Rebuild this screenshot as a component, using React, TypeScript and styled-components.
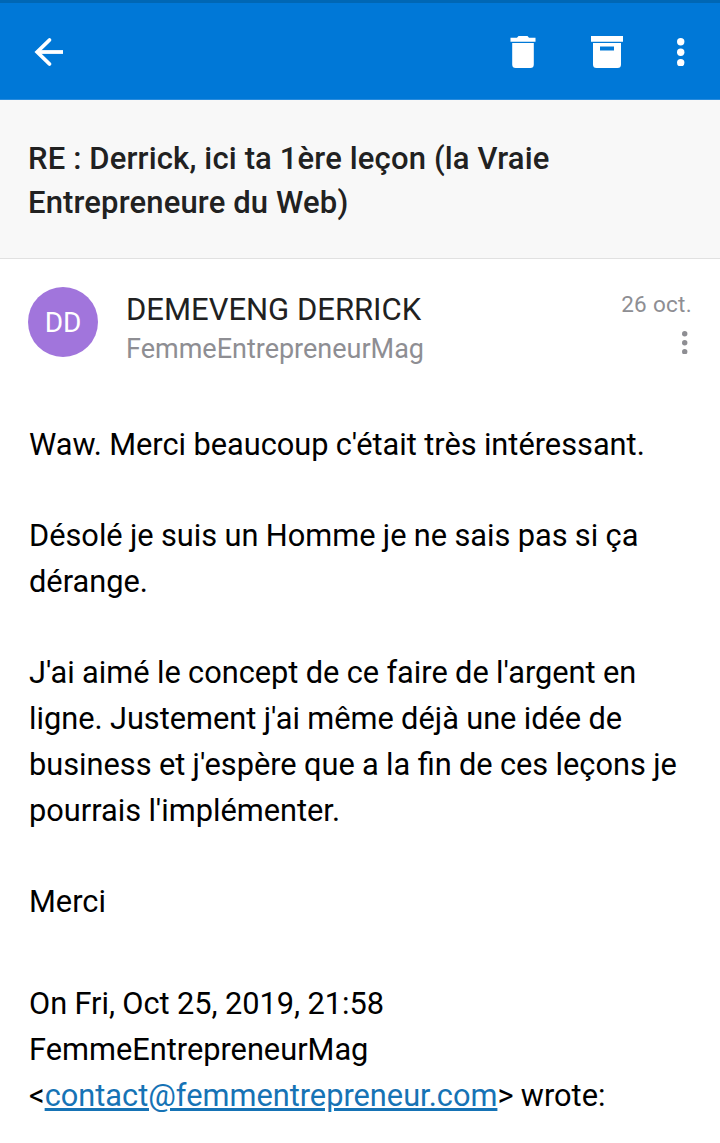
import { FC } from 'react';
import styled, { createGlobalStyle } from 'styled-components';

const GlobalStyle = createGlobalStyle`
  body {
    margin: 0;
    background: #fff;
    font-family: Roboto, sans-serif;
  }
`;

const Screen = styled.div`
  width: 720px;
  height: 1143px;
  overflow: hidden;
  background: #fff;
`;

const Toolbar = styled.header`
  box-sizing: border-box;
  display: flex;
  align-items: center;
  height: 100px;
  padding: 2px 25px 0 25px;
  border-top: 3px solid #0067b4;
  border-bottom: 1px solid #2a8cdd;
  background: #0078d7;
  color: #fff;
`;

const Actions = styled.div`
  display: flex;
  align-items: center;
  gap: 36px;
  margin-left: auto;
`;

const IconButton = styled.button<{ $width?: number }>`
  display: flex;
  justify-content: center;
  width: ${({ $width }) => $width ?? 48}px;
  padding: 0;
  border: 0;
  background: none;
  color: inherit;
`;

const Subject = styled.h1`
  box-sizing: border-box;
  height: 159px;
  margin: 0;
  padding: 37px 28px 0;
  border-bottom: 1px solid #e1e1e1;
  background: #f8f8f8;
  color: #212121;
  font-size: 31px;
  font-weight: 500;
  line-height: 44px;
  letter-spacing: 0.15px;
`;

const MessageHeader = styled.section`
  display: flex;
  height: 134.6px;
  padding: 28px 28px 0;
`;

const Avatar = styled.div`
  display: flex;
  align-items: center;
  justify-content: center;
  width: 70px;
  height: 70px;
  border-radius: 50%;
  background: #a175dc;
  color: #fff;
  font-size: 28px;
`;

const Sender = styled.div`
  margin-left: 28px;
  padding-top: 1px;
`;

const Name = styled.div`
  color: #212121;
  font-size: 31px;
  line-height: 44px;
`;

const Recipient = styled.div`
  color: #8e8e93;
  font-size: 27px;
  line-height: 34px;
`;

const Meta = styled.div`
  display: flex;
  flex-direction: column;
  align-items: flex-end;
  gap: 9px;
  margin-left: auto;
  color: #8e8e93;
  font-size: 22.5px;
  line-height: 35px;
  letter-spacing: 0.3px;
`;

const Body = styled.article`
  padding: 0 29px;
  color: #000;
  font-size: 30.75px;
  line-height: 45.75px;
  word-spacing: -0.3px;
`;

const Paragraph = styled.p`
  margin: 0 0 45.75px;
`;

const Quote = styled.p`
  margin: 56.4px 0 0;
`;

const Link = styled.a`
  color: #1673b5;
  text-decoration: underline;
`;

const Dots: FC<{ radius: number; gap: number }> = ({ radius, gap }) => (
  <svg width={radius * 2} height={radius * 2 + gap * 2} fill="currentColor">
    {[0, 1, 2].map((i) => (
      <circle key={i} cx={radius} cy={radius + gap * i} r={radius} />
    ))}
  </svg>
);

const App: FC = () => (
  <>
    <GlobalStyle />
    <Screen>
      <Toolbar>
        <IconButton aria-label="Retour">
          <svg
            width="42"
            height="42"
            fill="none"
            stroke="currentColor"
            strokeWidth="3.8"
          >
            <path d="M35 21H9" />
            <path d="M21.500 9L9.200 21l12.300 12" strokeLinecap="round" />
          </svg>
        </IconButton>
        <Actions>
          <IconButton aria-label="Supprimer">
            <svg width="42" height="42" fill="currentColor">
              <path d="M8.500 6.800H15l1.500-1.800h9l1.500 1.800h6.500v4h-25zM10.200 12h21.600v21.500q0 3.500-3.500 3.500H13.700q-3.500 0-3.500-3.500z" />
            </svg>
          </IconButton>
          <IconButton aria-label="Archiver">
            <svg width="42" height="42" fill="currentColor">
              <path
                d="M5 5h32v5.800H5zM7 12h28v21.500q0 3.500-3.500 3.500H10.500q-3.500 0-3.500-3.500zM14 15.500v4h14v-4z"
                fillRule="evenodd"
              />
            </svg>
          </IconButton>
          <IconButton aria-label="Plus" $width={28}>
            <Dots radius={3.7} gap={10.5} />
          </IconButton>
        </Actions>
      </Toolbar>
      <Subject>
        RE : Derrick, ici ta 1ère leçon (la Vraie
        <br />
        Entrepreneure du Web)
      </Subject>
      <MessageHeader>
        <Avatar>DD</Avatar>
        <Sender>
          <Name>DEMEVENG DERRICK</Name>
          <Recipient>FemmeEntrepreneurMag</Recipient>
        </Sender>
        <Meta>
          26 oct.
          <IconButton aria-label="Options" $width={14}>
            <Dots radius={2.7} gap={9} />
          </IconButton>
        </Meta>
      </MessageHeader>
      <Body>
        <Paragraph>Waw. Merci beaucoup c'était très intéressant.</Paragraph>
        <Paragraph>
          Désolé je suis un Homme je ne sais pas si ça
          <br />
          dérange.
        </Paragraph>
        <Paragraph>
          J'ai aimé le concept de ce faire de l'argent en
          <br />
          ligne. Justement j'ai même déjà une idée de
          <br />
          business et j'espère que a la fin de ces leçons je
          <br />
          pourrais l'implémenter.
        </Paragraph>
        <Paragraph>Merci</Paragraph>
        <Quote>
          On Fri, Oct 25, 2019, 21:58
          <br />
          FemmeEntrepreneurMag
          <br />
          &lt;<Link>contact@femmentrepreneur.com</Link>&gt; wrote:
        </Quote>
      </Body>
    </Screen>
  </>
);

export default App;
